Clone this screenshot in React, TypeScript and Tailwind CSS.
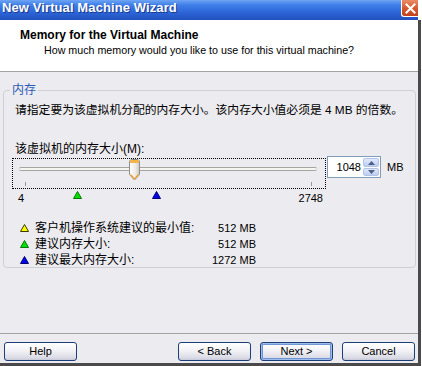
import React from "react";

function Tri({ fill, stroke }: { fill: string; stroke: string }) {
  return (
    <svg width="9" height="8" viewBox="0 0 9 8" className="block">
      <polygon points="4.5,0.5 8.5,7.5 0.5,7.5" fill={fill} stroke={stroke} strokeWidth="1" strokeLinejoin="miter" />
    </svg>
  );
}

function Thumb() {
  return (
    <svg width="11" height="22" viewBox="0 0 11 22" className="block">
      <defs>
        <linearGradient id="tg" x1="0" y1="0" x2="1" y2="0">
          <stop offset="0" stopColor="#ffffff" />
          <stop offset="0.6" stopColor="#ecebe6" />
          <stop offset="1" stopColor="#c9c8c2" />
        </linearGradient>
      </defs>
      <path d="M0.5,3 Q0.5,0.5 3,0.5 H8 Q10.5,0.5 10.5,3 V15.5 L5.5,21 L0.5,15.5 Z" fill="url(#tg)" stroke="#8f8e8a" strokeWidth="1" />
      <rect x="1" y="1" width="9" height="3" rx="1" fill="#f4b547" />
      <path d="M1.5,15.5 L5.5,20 L9.5,15.5" fill="none" stroke="#eea53a" strokeWidth="1.2" />
    </svg>
  );
}

function Btn({ label, focus }: { label: string; focus?: boolean }) {
  return (
    <div
      className={
        "w-[73px] h-[19px] rounded-[3px] border border-[#1d3f78] flex items-center justify-center text-[11px] leading-none text-black bg-[linear-gradient(to_bottom,#ffffff_0%,#f4f4f8_40%,#dcdce6_85%,#c7c9d9_100%)] " +
        (focus ? "shadow-[inset_0_0_0_1px_#9fbde9,inset_0_0_0_2px_#6f95d6]" : "")
      }
    >
      {label}
    </div>
  );
}

export default function App() {
  return (
    <div className="w-[422px] h-[366px] bg-white overflow-hidden font-['Liberation_Sans','Noto_Sans_CJK_SC',sans-serif] text-black">
      {/* Title bar */}
      <div className="w-[418px] h-[20px] flex items-start justify-between bg-[linear-gradient(to_bottom,#6ea4f3_0%,#3f7fe8_25%,#2d66d8_60%,#2250bd_100%)]">
        <div className="pl-[2px] text-[13px] leading-[16px] font-bold text-white [text-shadow:1px_1px_0_#1a3a8a] tracking-[0.1px]">
          New Virtual Machine Wizard
        </div>
        <div className="w-[17px] h-[17px] rounded-bl-[3px] border-l border-b border-white bg-[linear-gradient(to_bottom,#ea8b66_0%,#d65a31_50%,#c2421d_100%)] flex items-center justify-center">
          <svg width="11" height="11" viewBox="0 0 11 11">
            <path d="M1.5,1.5 L9.5,9.5 M9.5,1.5 L1.5,9.5" stroke="#ffffff" strokeWidth="2" strokeLinecap="square" />
          </svg>
        </div>
      </div>

      {/* Body */}
      <div className="w-[421px] h-[346px] border-r-[3px] border-b-[3px] border-[#4a4a4a] bg-[#ecebef] flex flex-col">
        {/* Header */}
        <div className="h-[52px] bg-white border-b border-[#a3a3a3] pt-[8px]">
          <div className="pl-[20px] text-[12px] leading-[15px] font-bold whitespace-nowrap">Memory for the Virtual Machine</div>
          <div className="pl-[44px] text-[10.7px] leading-[15px] whitespace-nowrap">How much memory would you like to use for this virtual machine?</div>
        </div>

        {/* Content */}
        <div className="flex-1 pt-[11px] pl-[3px] pr-[2px]">
          <fieldset className="h-[185px] border border-[#cfcfd4] rounded-[4px] pl-[11px] pr-[8px]">
            <legend className="ml-[-5px] px-[2px] text-[12px] leading-[14px] text-[#2a5cb8]">内存</legend>
            <div className="mt-[6px] text-[11.8px] leading-[14px] whitespace-nowrap">
              请指定要为该虚拟机分配的内存大小。该内存大小值必须是 4 MB 的倍数。
            </div>
            <div className="mt-[25px] text-[12px] leading-[14px] whitespace-nowrap">该虚拟机的内存大小(M):</div>
            <div className="flex items-start ml-[-3px]">
              <div className="w-[314px]">
                <div className="relative mt-[2px] h-[31px] border border-dotted border-black">
                  {/* track */}
                  <div className="absolute left-[6px] top-[8px] w-[298px] h-[4px] rounded-[2px] border-t border-b border-[#a5a4a0] bg-[#f6f6f1]" />
                  {/* ticks */}
                  <div className="absolute left-[12px] top-[23px] w-px h-[4px] bg-[#9a9a9a]" />
                  <div className="absolute left-[298px] top-[23px] w-px h-[4px] bg-[#9a9a9a]" />
                  {/* thumb */}
                  <div className="absolute left-[116px] top-[0px]">
                    <Thumb />
                  </div>
                </div>
                <div className="relative h-[16px] text-[11px] leading-[16px]">
                  <span className="absolute left-[6px] top-[1px]">4</span>
                  <div className="absolute left-[61px] top-[2px]">
                    <Tri fill="#00e000" stroke="#007a00" />
                  </div>
                  <div className="absolute left-[140px] top-[2px]">
                    <Tri fill="#0000f0" stroke="#000070" />
                  </div>
                  <span className="absolute right-[3px] top-[1px]">2748</span>
                </div>
              </div>
              <div className="ml-[1px] w-[54px] h-[22px] border border-[#7f9db9] bg-white flex items-center">
                <div className="flex-1 text-right text-[11px] leading-none pr-[2px]">1048</div>
                <div className="w-[16px] h-[18px] mr-[1px] flex flex-col gap-[1px]">
                  <div className="h-[9px] rounded-[2px] border border-[#b3c3e6] bg-[linear-gradient(to_bottom,#e1e9fb,#bccdf3)] flex items-center justify-center">
                    <svg width="7" height="4" viewBox="0 0 7 4"><polygon points="3.5,0 7,4 0,4" fill="#4d6185" /></svg>
                  </div>
                  <div className="h-[8px] rounded-[2px] border border-[#b3c3e6] bg-[linear-gradient(to_bottom,#e1e9fb,#bccdf3)] flex items-center justify-center">
                    <svg width="7" height="4" viewBox="0 0 7 4"><polygon points="0,0 7,0 3.5,4" fill="#4d6185" /></svg>
                  </div>
                </div>
              </div>
              <div className="ml-[6px] text-[11px] leading-[22px]">MB</div>
            </div>
            <div className="mt-[15px] ml-[5px] w-[236px] text-[12px] leading-[16px]">
              <div className="flex items-center">
                <Tri fill="#ffff00" stroke="#3a3a00" />
                <span className="ml-[6px] flex-1 whitespace-nowrap">客户机操作系统建议的最小值:</span>
                <span className="text-[11px]">512 MB</span>
              </div>
              <div className="flex items-center">
                <Tri fill="#00e000" stroke="#007a00" />
                <span className="ml-[6px] flex-1 whitespace-nowrap">建议内存大小:</span>
                <span className="text-[11px]">512 MB</span>
              </div>
              <div className="flex items-center">
                <Tri fill="#0000f0" stroke="#000070" />
                <span className="ml-[6px] flex-1 whitespace-nowrap">建议最大内存大小:</span>
                <span className="text-[11px]">1272 MB</span>
              </div>
            </div>
          </fieldset>
        </div>

        {/* Footer */}
        <div className="h-[30px] border-t border-[#a3a3a3] pt-[8px] pl-[4px] pr-[3px] flex items-start">
          <Btn label="Help" />
          <div className="flex-1" />
          <div className="flex gap-[9px]">
            <Btn label="< Back" />
            <Btn label="Next >" focus />
            <Btn label="Cancel" />
          </div>
        </div>
      </div>
    </div>
  );
}
